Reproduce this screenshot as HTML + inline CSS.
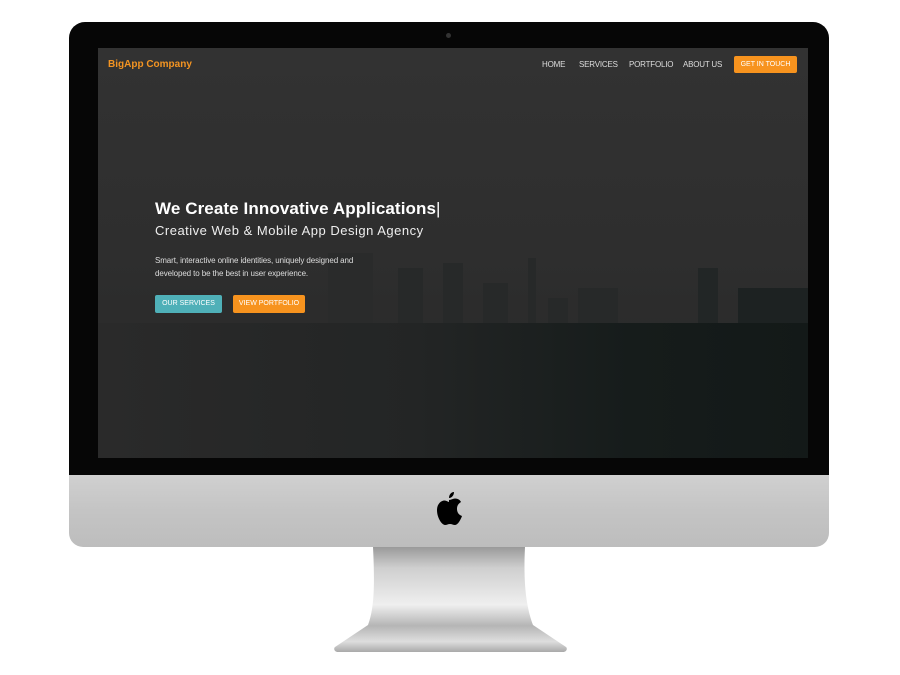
<!DOCTYPE html>
<html><head><style>
body{margin:0;width:900px;height:675px;background:#fff;position:relative;overflow:hidden;font-family:"Liberation Sans",sans-serif}
.bezel{position:absolute;left:69px;top:22px;width:760px;height:460px;background:#060606;border-radius:16px 16px 0 0}
.chin{position:absolute;left:69px;top:475px;width:760px;height:72px;background:linear-gradient(#d0d0d0,#c4c4c4 50%,#bdbdbd);border-radius:0 0 14px 14px}
.screen{position:absolute;left:98px;top:48px;width:710px;height:410px;background:linear-gradient(180deg,#323232 0%,#2e2e2e 50%,#262727 100%);overflow:hidden}
.cam{position:absolute;left:446px;top:33px;width:5px;height:5px;border-radius:50%;background:#333}
.logo{position:absolute;left:10px;top:11px;color:#f39422;font-weight:bold;font-size:10px}
.nav{position:absolute;top:12px;font-size:8px;color:#ddd;letter-spacing:-.2px}
.btn{position:absolute;font-size:7px;color:#fff;text-align:center;border-radius:2px}
h1{position:absolute;left:57px;top:151px;margin:0;font-size:17px;color:#fff;font-weight:bold;letter-spacing:.1px}
h2{position:absolute;left:57px;top:175px;margin:0;font-size:13px;color:#eee;font-weight:normal;letter-spacing:.5px}
p{position:absolute;left:57px;top:206px;margin:0;font-size:8px;line-height:13px;color:#ddd;letter-spacing:-.1px}
.b{position:absolute;bottom:0;background:#272929}
.low{position:absolute;left:0;bottom:0;width:710px;height:135px;background:linear-gradient(90deg,#2a2a2a 0%,#232525 45%,#161c1b 75%,#131918 100%)}
</style></head><body>
<div class="bezel"></div><div class="cam"></div>
<div class="screen">
<div class="b" style="left:230px;width:45px;height:205px;background:#2a2b2b"></div>
<div class="b" style="left:300px;width:25px;height:190px"></div>
<div class="b" style="left:345px;width:20px;height:195px"></div>
<div class="b" style="left:385px;width:25px;height:175px"></div>
<div class="b" style="left:430px;width:8px;height:200px"></div>
<div class="b" style="left:450px;width:20px;height:160px"></div>
<div class="b" style="left:480px;width:40px;height:170px"></div>
<div class="b" style="left:600px;width:20px;height:190px;background:#222626"></div>
<div class="b" style="left:640px;width:70px;height:170px;background:#1d2222"></div>
<div class="b" style="left:0;width:230px;height:150px;background:#2c2c2c"></div>
<div class="low"></div>
<div class="logo">BigApp Company</div>
<div class="nav" style="left:444px">HOME</div>
<div class="nav" style="left:481px">SERVICES</div>
<div class="nav" style="left:531px">PORTFOLIO</div>
<div class="nav" style="left:585px">ABOUT US</div>
<div class="btn" style="left:636px;top:8px;width:63px;height:17px;line-height:17px;background:#f7931e">GET IN TOUCH</div>
<h1>We Create Innovative Applications<span style="font-weight:normal">|</span></h1>
<h2>Creative Web &amp; Mobile App Design Agency</h2>
<p>Smart, interactive online identities, uniquely designed and<br>developed to be the best in user experience.</p>
<div class="btn" style="left:57px;top:247px;width:67px;height:18px;line-height:18px;background:#4fb0b8">OUR SERVICES</div>
<div class="btn" style="left:135px;top:247px;width:72px;height:18px;line-height:18px;background:#f7931e">VIEW PORTFOLIO</div>
</div>
<div class="chin"></div>
<svg style="position:absolute;left:433px;top:490px" width="32" height="38" viewBox="0 0 32 38"><path d="M21 2c0 3-2 6-5 6 0-3 2-6 5-6zM16 10c2 0 4-1.5 6-1.5 3 0 5 1.5 6 3.5-3 2-4 4-4 7 0 3.5 2 6 5 7-1 3-4 9-7 9-2 0-3-1-5-1s-3 1-5 1c-3 0-8-7-8-15 0-6 4-9.5 7.5-9.5 2 0 3.5 1.5 4.5 1.5z" fill="#000"/></svg>
<svg style="position:absolute;left:330px;top:546px" width="240" height="108" viewBox="0 0 240 108">
<defs><linearGradient id="g" x1="0" y1="0" x2="0" y2="1"><stop offset="0" stop-color="#9a9a9a"/><stop offset=".2" stop-color="#cfcfcf"/><stop offset=".55" stop-color="#efefef"/><stop offset=".75" stop-color="#b5b5b5"/><stop offset=".9" stop-color="#dedede"/><stop offset="1" stop-color="#aaa"/></linearGradient></defs>
<path d="M43 1h152c-2 40 2 62 8 78l33 22c2 2 0 5-3 5H8c-3 0-5-3-3-5l33-22c6-16 7-38 5-78z" fill="url(#g)"/></svg>
</body></html>
